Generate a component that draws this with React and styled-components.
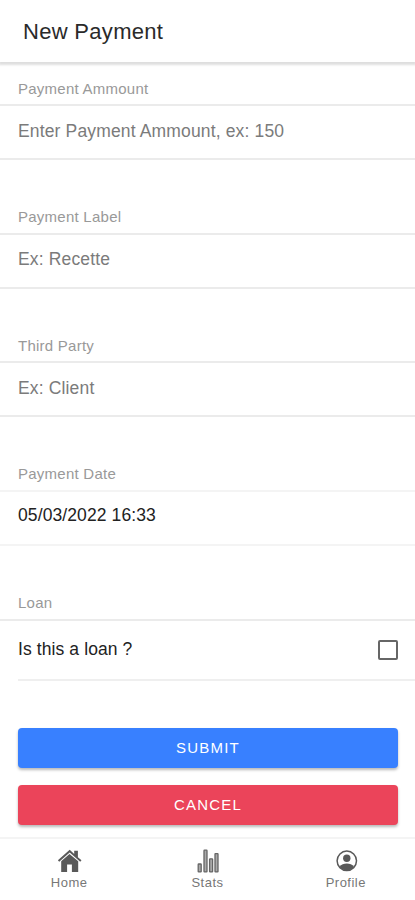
import React, { useState } from 'react';
import styled, { createGlobalStyle } from 'styled-components';

const fields = [
  { id: 'amount', label: 'Payment Ammount', placeholder: 'Enter Payment Ammount, ex: 150' },
  { id: 'label', label: 'Payment Label', placeholder: 'Ex: Recette' },
  { id: 'thirdParty', label: 'Third Party', placeholder: 'Ex: Client' },
];

const HomeIcon = () => (
  <Icon viewBox="0 0 24 24">
    <path d="M12.5 5 4.2 12.2V23h5.9v-7.4h4.8V23h6.3V12.2z" />
    <path d="M20.9 8.2V1.8h-3.7v3.1L12.7.8.9 11.2l1.3 1.5L12.7 3.6l10.5 9.1 1.3-1.5z" />
  </Icon>
);

const StatsIcon = () => (
  <Icon viewBox="0 0 24 24">
    <g fill="#aaa" stroke="#666" strokeWidth="1.3">
      <rect x="3.2" y="15" width="3" height="7.9" rx="0.5" />
      <rect x="9" y="1.2" width="3" height="21.7" rx="0.5" />
      <rect x="14.6" y="9.8" width="3" height="13.1" rx="0.5" />
      <rect x="20" y="4.6" width="3" height="18.3" rx="0.5" />
    </g>
  </Icon>
);

const ProfileIcon = () => (
  <Icon viewBox="0 0 24 24">
    <circle cx="12.8" cy="11.8" r="9.7" fill="none" stroke="#595959" strokeWidth="1.5" />
    <circle cx="12.8" cy="9.2" r="3.7" />
    <path d="M5.5 18C7.2 15.6 9.9 14.6 12.8 14.6s5.6 1 7.3 3.4a9.6 9.6 0 0 1-7.3 3.5A9.6 9.6 0 0 1 5.5 18z" />
  </Icon>
);

const tabs = [
  { name: 'Home', icon: HomeIcon },
  { name: 'Stats', icon: StatsIcon },
  { name: 'Profile', icon: ProfileIcon },
];

const App = () => {
  const [values, setValues] = useState({ amount: '', label: '', thirdParty: '' });
  const [date, setDate] = useState('05/03/2022 16:33');
  const [loan, setLoan] = useState(false);

  const handleChange = (e) => {
    setValues({ ...values, [e.target.id]: e.target.value });
  };

  const handleCancel = () => {
    setValues({ amount: '', label: '', thirdParty: '' });
    setLoan(false);
  };

  return (
    <>
      <GlobalStyle />
      <Page>
        <Header>
          <Title>New Payment</Title>
        </Header>
        <Form onSubmit={(e) => e.preventDefault()}>
          {fields.map((field) => (
            <Section key={field.id}>
              <Label htmlFor={field.id}>{field.label}</Label>
              <Item>
                <Input
                  id={field.id}
                  placeholder={field.placeholder}
                  value={values[field.id]}
                  onChange={handleChange}
                />
              </Item>
            </Section>
          ))}
          <Section>
            <Label htmlFor="date">Payment Date</Label>
            <Item $light>
              <DateInput id="date" value={date} onChange={(e) => setDate(e.target.value)} />
            </Item>
          </Section>
          <Label as="div">Loan</Label>
          <LoanItem>
            <LoanRow>
              Is this a loan ?
              <Checkbox type="checkbox" checked={loan} onChange={() => setLoan(!loan)} />
            </LoanRow>
          </LoanItem>
          <Buttons>
            <Button type="submit">SUBMIT</Button>
            <Button type="button" $danger onClick={handleCancel}>CANCEL</Button>
          </Buttons>
        </Form>
        <TabBar>
          {tabs.map(({ name, icon: TabIcon }) => (
            <Tab key={name} type="button">
              <TabIcon />
              <TabLabel>{name}</TabLabel>
            </Tab>
          ))}
        </TabBar>
      </Page>
    </>
  );
};

export default App;

const GlobalStyle = createGlobalStyle`
  * {
    box-sizing: border-box;
  }

  body {
    margin: 0;
    background: #fff;
  }

  body, input, button {
    font-family: "Liberation Sans", Arial, sans-serif;
  }
`;

const Page = styled.div`
  display: flex;
  flex-direction: column;
  height: 900px;
  overflow: hidden;
`;

const Header = styled.header`
  display: flex;
  align-items: center;
  flex: none;
  height: 62px;
  padding: 2px 23px 0;
  box-shadow: 0 2px 2px 1px rgba(0, 0, 0, 0.13);
`;

const Title = styled.h1`
  margin: 0;
  font-size: 22px;
  font-weight: normal;
  letter-spacing: 0.3px;
  color: #2a2a2a;
`;

const Form = styled.form`
  flex: 1;
  padding-top: 2px;
`;

const Section = styled.div`
  height: 128.65px;
`;

const Label = styled.label`
  display: flex;
  align-items: center;
  height: 40px;
  padding: 8px 18px 0;
  font-size: 15px;
  letter-spacing: 0.25px;
  color: #999;
`;

const Item = styled.div`
  display: flex;
  height: 56px;
  padding: 0 18px;
  border-top: 2px solid ${(props) => (props.$light ? '#f4f4f4' : '#ebebeb')};
  border-bottom: 2px solid ${(props) => (props.$light ? '#f4f4f4' : '#ebebeb')};
`;

const Input = styled.input`
  width: 100%;
  padding: 0 0 2px;
  border: none;
  outline: none;
  background: none;
  font-size: 17.5px;
  letter-spacing: 0.15px;
  color: #222;

  &::placeholder {
    color: #7b7b7b;
    opacity: 1;
  }
`;

const DateInput = styled(Input)`
  padding-bottom: 4px;
  letter-spacing: 0.1px;
`;

const LoanItem = styled.div`
  padding-left: 18px;
  border-top: 2px solid #ebebeb;
`;

const LoanRow = styled.label`
  display: flex;
  align-items: center;
  justify-content: space-between;
  height: 60px;
  padding-right: 17px;
  border-bottom: 2px solid #efefef;
  font-size: 17.5px;
  letter-spacing: 0.1px;
  color: #222;
`;

const Checkbox = styled.input`
  appearance: none;
  width: 20px;
  height: 20px;
  margin: 0;
  border: 2px solid #666;
  border-radius: 2px;

  &:checked {
    background: #3880ff;
    border-color: #3880ff;
  }
`;

const Buttons = styled.div`
  display: flex;
  flex-direction: column;
  gap: 17px;
  padding: 47px 17px 0 18px;
`;

const Button = styled.button`
  height: 40px;
  padding: 0;
  border: none;
  border-radius: 4px;
  background: ${(props) => (props.$danger ? '#eb445a' : '#3880ff')};
  box-shadow: 0 2px 3px rgba(0, 0, 0, 0.28);
  color: #fff;
  font-size: 15px;
  letter-spacing: 1.2px;
`;

const TabBar = styled.nav`
  display: grid;
  grid-template-columns: repeat(3, 1fr);
  flex: none;
  height: 63px;
  border-top: 2px solid #f4f4f4;
  background: #fff;
`;

const Tab = styled.button`
  display: flex;
  flex-direction: column;
  align-items: center;
  gap: 2px;
  padding: 10px 0 0;
  border: none;
  background: none;
  color: #595959;
`;

const Icon = styled.svg`
  width: 24px;
  height: 24px;
  fill: #595959;
  overflow: visible;
`;

const TabLabel = styled.span`
  font-size: 13px;
  line-height: 16px;
  letter-spacing: 0.5px;
  color: #777;
`;
